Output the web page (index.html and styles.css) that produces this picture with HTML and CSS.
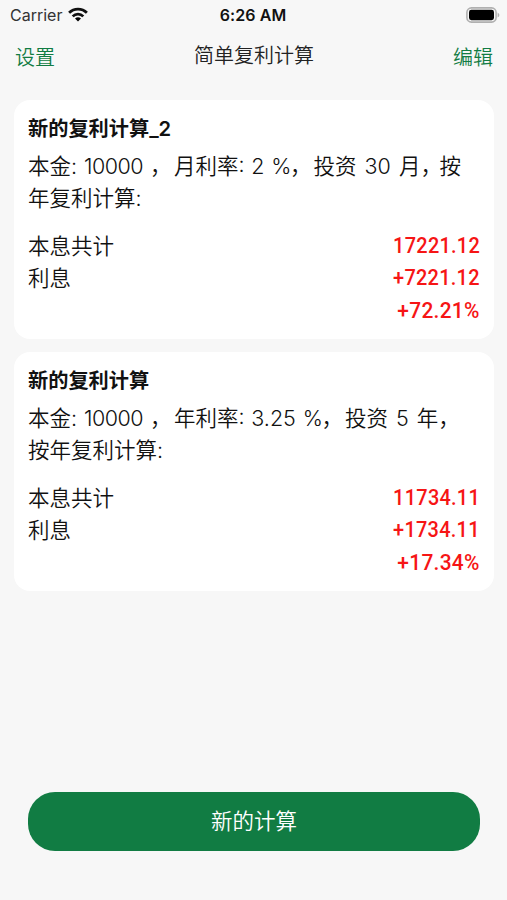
FILE: index.html
```html
<!DOCTYPE html>
<html lang="zh-CN">
<head>
<meta charset="utf-8">
<title>简单复利计算</title>
<link rel="stylesheet" href="styles.css">
</head>
<body>
<div class="status">
  <div class="carrier"><span class="carrier-name">Carrier</span>
    <svg class="wifi" width="20" height="15" viewBox="0 0 20 15"><path d="M10 14.6 7 11.6a4.3 4.3 0 0 1 6 0z"/><path d="M4.7 9.4a7.4 7.4 0 0 1 10.6 0M1.1 5.8a12.4 12.4 0 0 1 17.8 0" fill="none" stroke="#111" stroke-width="2.7"/></svg>
  </div>
  <time class="time">6:26 AM</time>
  <svg class="battery" width="34" height="16" viewBox="0 0 34 16"><rect x=".9" y=".9" width="29.2" height="14.2" rx="4.5" fill="none" stroke="#b0b0b0" stroke-width="1.6"/><rect x="3" y="2.8" width="25" height="10.4" rx="2.4"/><path d="M31.6 5.5q1.8 1 1.8 2.5t-1.8 2.5z" fill="#b0b0b0"/></svg>
</div>
<header class="nav"><span class="action">设置</span><h1 class="title">简单复利计算</h1><span class="action end">编辑</span></header>
<main class="list">
  <section class="card">
    <h2 class="name">新的复利计算_2</h2>
    <p class="desc"><span class="line">本金: <span class="digits">10000</span> <span class="separator">，</span>月利率: 2 <span class="percent">%</span><span class="comma">，</span>投资<span class="term"> 30 </span>月<span class="tight">，</span>按</span><span class="line">年复利计算:</span></p>
    <div class="row"><span>本息共计</span><span class="num">17221.12</span></div>
    <div class="row"><span>利息</span><span class="num">+7221.12</span></div>
    <div class="row"><span></span><span class="num rate">+72.21%</span></div>
  </section>
  <section class="card">
    <h2 class="name">新的复利计算</h2>
    <p class="desc"><span class="line">本金: <span class="digits">10000</span> <span class="separator">，</span>年利率: 3.25 <span class="percent">%</span><span class="comma">，</span>投资<span class="term"> 5 </span>年，</span><span class="line">按年复利计算:</span></p>
    <div class="row"><span>本息共计</span><span class="num">11734.11</span></div>
    <div class="row"><span>利息</span><span class="num">+1734.11</span></div>
    <div class="row"><span></span><span class="num rate">+17.34%</span></div>
  </section>
</main>
<button class="create">新的计算</button>
</body>
</html>
```
FILE: styles.css
```css
* { box-sizing: border-box; margin: 0; padding: 0; }
body { height: 900px; display: flex; flex-direction: column; background: #f7f7f7; color: #111; font-family: Inter, "Noto Sans CJK SC", sans-serif; font-weight: 350; overflow: hidden; }
.status { height: 29px; display: grid; grid-template-columns: 1fr auto 1fr; align-items: center; padding: 0 7px 0 10px; font-size: 16px; font-weight: 400; }
.carrier { display: flex; align-items: center; gap: 6px; color: #333; }
.wifi { margin-bottom: 1px; }
.time { font-weight: 600; letter-spacing: .1px; margin-right: 4px; }
.battery { justify-self: end; }
.nav { height: 71px; display: grid; grid-template-columns: 1fr auto 1fr; padding: 0 14px 0 15px; line-height: 30px; font-size: 20px; }
.title { font-size: 20px; font-weight: 350; padding-top: 12px; color: #222; }
.action { color: #117c43; padding-top: 14px; }
.end { text-align: right; }
.list { display: flex; flex-direction: column; gap: 13px; padding: 0 13px 0 14px; }
.card { height: 239px; border-radius: 16px; background: #fff; padding: 12px 14px 13px; }
.name { font-size: 20.2px; line-height: 33px; font-weight: 600; }
.desc { font-size: 21.5px; line-height: 32px; padding-top: 5px; margin-bottom: 16px; word-spacing: .8px; }
.line { display: block; white-space: nowrap; }
.digits { letter-spacing: -.5px; }
.separator { letter-spacing: 2.5px; }
.percent { letter-spacing: -1.5px; }
.comma { letter-spacing: 2px; }
.term { word-spacing: 2px; }
.tight { letter-spacing: -2.5px; }
.row { height: 32.3px; display: flex; justify-content: space-between; line-height: 32px; font-size: 21.5px; }
.num { color: #f61515; font-family: Roboto, sans-serif; font-weight: 500; font-size: 22px; letter-spacing: .3px; transform: scaleX(.905); transform-origin: right; }
.rate { transform: scaleX(.95); }
.create { height: 59px; margin: auto 27px 49px 28px; border: 0; border-radius: 27px; background: #117c43; color: #fff; font: 350 21.5px/57px Inter, "Noto Sans CJK SC", sans-serif; }
```
